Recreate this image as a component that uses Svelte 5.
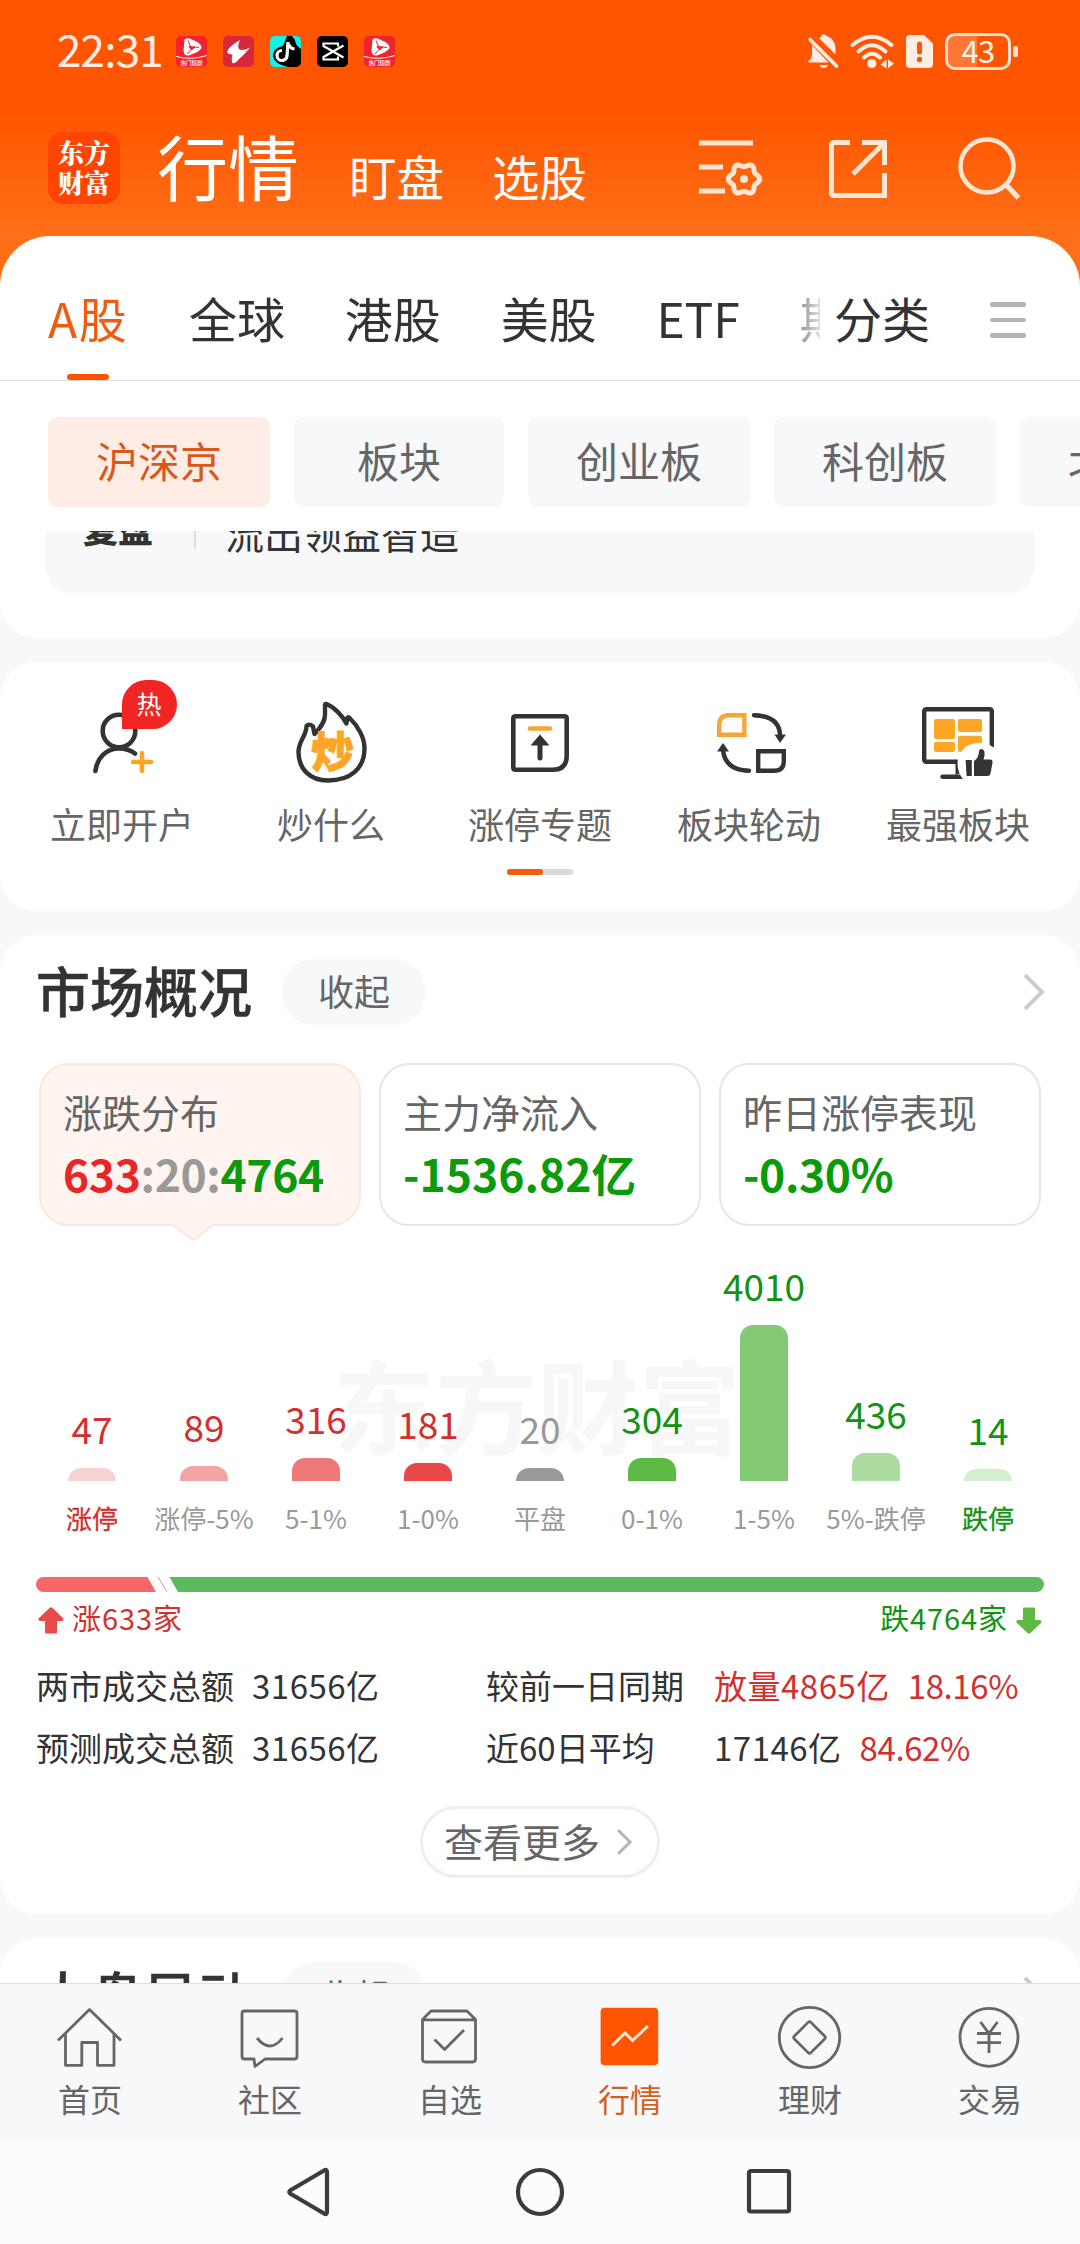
<script lang="ts">
  interface Bucket {
    label: string
    count: number
    height: number
    color: string
    tone: string
  }

  const tabs = ['A股', '全球', '港股', '美股', 'ETF', '期货']
  const chips = ['沪深京', '板块', '创业板', '科创板', '北交所']

  const buckets: Bucket[] = [
    { label: '涨停', count: 47, height: 13, color: '#fad1d2', tone: 'up edge' },
    { label: '涨停-5%', count: 89, height: 15, color: '#f3a5a6', tone: 'up' },
    { label: '5-1%', count: 316, height: 23, color: '#ee7778', tone: 'up' },
    { label: '1-0%', count: 181, height: 18, color: '#e84748', tone: 'up' },
    { label: '平盘', count: 20, height: 13, color: '#999999', tone: 'flat' },
    { label: '0-1%', count: 304, height: 23, color: '#5cb943', tone: 'down' },
    { label: '1-5%', count: 4010, height: 156, color: '#84ca74', tone: 'down' },
    { label: '5%-跌停', count: 436, height: 28, color: '#addca1', tone: 'down' },
    { label: '跌停', count: 14, height: 12, color: '#d6eed0', tone: 'down edge' },
  ]

  const nav = ['首页', '社区', '自选', '行情', '理财', '交易']
  const activeNav = '行情'

  // wavy outline of the settings gear
  function gearPath(cx: number, cy: number, r: number, wave: number) {
    let d = ''
    for (let i = 0; i < 72; i++) {
      const a = (i / 72) * Math.PI * 2
      const rr = r + wave * Math.cos(6 * a)
      d += `${i ? 'L' : 'M'}${(cx + rr * Math.cos(a)).toFixed(2)} ${(cy + rr * Math.sin(a)).toFixed(2)}`
    }
    return d + 'Z'
  }
</script>

{#snippet hotApp()}
  <svg class="app-icon" viewBox="0 0 31 31">
    <rect width="31" height="31" rx="5" fill="#f2222e" />
    <path d="M8.500 3.500Q11 1 16 3.500Q26 7.500 25.500 12Q24 15.500 13 19.500Q8 20 7.500 15Z" fill="#fff" />
    <path d="M13 10.500l6 .5-3.500 3zM12 4.500l2.500 6M23 11.500l-5-.5M11 18l4-4.500" fill="#f2222e" stroke="#f2222e" stroke-width="1" />
    <path d="M0 20.500Q15 24.500 31 19.500" fill="none" stroke="#fff" stroke-width="1" />
    <text x="15.500" y="29" text-anchor="middle" font-size="5.500" font-weight="500" fill="#fff">热门短剧</text>
  </svg>
{/snippet}

{#snippet chevron()}
  <svg class="chevron" viewBox="0 0 24 40" fill="none" stroke="#ccc" stroke-width="4">
    <path d="M3 3l17 17L3 37" />
  </svg>
{/snippet}

<div class="app">
  <header class="header">
    <div class="status">
      <span class="clock">22:31</span>
      <div class="status-apps">
        {@render hotApp()}
        <svg class="app-icon" viewBox="0 0 31 31">
          <rect width="31" height="31" rx="5" fill="#d8283a" />
          <path d="M17 4Q5 11 4 16Q4.500 18 9.500 18.500Q8 24 9.500 27Q11.500 28.500 16 23Q21 19 27 11.500Q21.500 15 16.500 13.500Q13.500 11.500 17 4Z" fill="#fff" />
        </svg>
        <svg class="app-icon" viewBox="0 0 31 31">
          <rect width="31" height="31" rx="5" fill="#000" />
          <path d="M5 0H17Q14 8 13 10Q3 12 3 20Q4 28 18 31H5Q0 31 0 26V5Q0 0 5 0ZM22 0h4q5 0 5 5v8q-6-4-6-9z" fill="#19efe4" />
          <path d="M18 6l-1 14a5 5 0 1 1-5-5.500M18.500 8q1.500 4.500 6 5" fill="none" stroke="#fff" stroke-width="3.200" />
        </svg>
        <svg class="app-icon" viewBox="0 0 31 31">
          <rect width="31" height="31" rx="5" fill="#000" />
          <path d="M26.500 9.500L6.500 21V23.500H21V20.500M26.500 21.500L6.500 10V7.500H21V10.500" fill="none" stroke="#fff" stroke-width="2.200" />
        </svg>
        {@render hotApp()}
      </div>
      <div class="status-right">
        <svg class="bell" viewBox="0 0 30 34" fill="#ffece3">
          <path d="M4 11L20.500 28.500H.5V26.500Q4 25 4 20Z" />
          <path d="M11 4Q13 3 13.500 1.500Q15.700-.8 18 1.500Q27 5 27.500 14V20.500Z" />
          <path d="M11.500 31h8.500q-1 3-4.200 3t-4.300-3z" />
          <path d="M2 5.500l26.500 26.500" stroke="#ffece3" stroke-width="3.600" stroke-linecap="round" />
        </svg>
        <svg class="wifi" viewBox="0 0 44 34" fill="none" stroke="#ffece3" stroke-width="4" stroke-linecap="round">
          <path d="M2.500 11Q22-5.500 41.500 11M8.500 17.500Q22 5 35.500 17.500M14 23.500Q22 16 30 23.500" />
          <circle cx="21.800" cy="29.500" r="4.600" fill="#ffece3" stroke="none" />
          <path d="M30.500 30.500l6-5v9zM44 29.500l-6-4v9z" fill="#ffece3" stroke="none" />
        </svg>
        <svg class="sim" viewBox="0 0 27 33">
          <path d="M4 0H18L27 8.500V29Q27 33 23 33H4Q0 33 0 29V4Q0 0 4 0Z" fill="#ffece3" />
          <path d="M13.500 9v8" stroke="#ff5500" stroke-width="5" stroke-linecap="round" />
          <circle cx="13.500" cy="24.500" r="2.700" fill="#ff5500" />
        </svg>
        <div class="battery"><span class="battery-level"></span><span class="battery-text">43</span></div>
        <span class="battery-nub"></span>
      </div>
    </div>

    <div class="titlebar">
      <div class="logo"><span>东方</span><span>财富</span></div>
      <nav class="sections">
        <span class="section current">行情</span>
        <span class="section">盯盘</span>
        <span class="section">选股</span>
      </nav>
      <div class="actions">
        <svg width="64" height="58" viewBox="0 0 64 58" fill="none" stroke="#ffe5d3" stroke-width="5">
          <path d="M0 3H54M0 27H24M0 51H26" />
          <path d={gearPath(45, 39, 14, 1.7)} stroke-linejoin="round" />
          <circle cx="45" cy="39" r="4" fill="#ffe5d3" stroke="none" />
        </svg>
        <svg width="58" height="58" viewBox="0 0 58 58" fill="none" stroke="#ffe5d3" stroke-width="5">
          <path d="M21 2.500H5.500Q2.500 2.500 2.500 5.500V52.500Q2.500 55.500 5.500 55.500H55.500V33M33 2.500H55.500V25M55 3L24 34" />
        </svg>
        <svg class="search" width="62" height="64" viewBox="0 0 62 64" fill="none" stroke="#ffe5d3" stroke-width="4.600">
          <circle cx="29" cy="29" r="26.500" />
          <path d="M47.500 47L60.500 61" stroke-width="5" />
        </svg>
      </div>
    </div>
  </header>

  <main class="content">
    <section class="panel top-panel">
      <div class="tabs">
        <div class="tab-list">
          {#each tabs as tab, i}
            <span class="tab" class:active={i === 0}>{tab}</span>
          {/each}
        </div>
        <span class="tab category">分类</span>
        <span class="menu"><i></i><i></i><i></i></span>
      </div>
      <div class="chips">
        {#each chips as chip, i}
          <span class="chip" class:active={i === 0}>{chip}</span>
        {/each}
      </div>
      <div class="news">
        <b class="news-tag">复盘</b>
        <span class="news-line"></span>
        <span class="news-text">流出领益智造</span>
      </div>
    </section>

    <section class="panel shortcuts">
      <div class="shortcut-grid">
        <div class="shortcut">
          <svg viewBox="0 0 90 90" fill="none" stroke="#333" stroke-width="4.600" stroke-linecap="round">
            <circle cx="42" cy="33" r="16.300" />
            <path d="M18.400 73C20 60 29 50.500 42 50.500C49 50.500 54 52.500 58 55.500" />
            <path d="M56 64h18M65 55v18" stroke="#ffa526" />
          </svg>
          <span class="hot">热</span>
          立即开户
        </div>
        <div class="shortcut">
          <svg viewBox="0 0 90 90" fill="none" stroke="#333" stroke-width="4.400" stroke-linejoin="round">
            <path d="M40.500 6C48 9 57 18 60.400 25.500L61.500 20Q62.500 18 64.500 21C72 28 78.500 40 78.500 50C78.500 71 64 82.500 42 82.500C24 82.500 12.500 71 12.500 54C12.500 43 20.500 38 20.500 28Q23 25 27 28.500L28.500 36C33 31 39 25 39 17V8Q38.500 5.500 40.500 6Z" />
            <text x="46.500" y="70" text-anchor="middle" font-size="43" font-weight="900" fill="#ffa526" stroke="#ffa526" stroke-width="1">炒</text>
          </svg>
          炒什么
        </div>
        <div class="shortcut">
          <svg viewBox="0 0 90 90" fill="none" stroke="#333" stroke-width="4.600">
            <path d="M20.500 18.300H69.500Q71.700 18.300 71.700 20.500V58Q71.700 71.700 58 71.700H20.500Q18.300 71.700 18.300 69.500V20.500Q18.300 18.300 20.500 18.300Z" />
            <path d="M35 30.500H55" stroke="#f5a637" stroke-linecap="round" />
            <path d="M45 42V60" stroke-width="5" stroke-linecap="round" />
            <path d="M45 36.500L54.500 47.500H35.500Z" fill="#333" stroke="none" />
          </svg>
          涨停专题
        </div>
        <div class="shortcut">
          <svg viewBox="0 0 90 90" fill="none" stroke="#333" stroke-width="4.400">
            <path d="M25 17.200H40.400V36.800H15.200V27Q15.200 17.200 25 17.200Z" stroke="#f5a637" />
            <path d="M54.200 53.200H79.800V63Q79.800 72.800 70 72.800H54.200Z" />
            <path d="M50 17.200Q76 18 76 38M45 72.800Q21 72 19 52" stroke-linecap="round" />
            <path d="M70.500 36.500H82L76 45ZM13 53.500H25L19 45Z" fill="#333" stroke="none" />
          </svg>
          板块轮动
        </div>
        <div class="shortcut">
          <svg viewBox="0 0 90 90">
            <rect x="11.200" y="11.200" width="67.600" height="52.600" rx="2" fill="none" stroke="#333" stroke-width="4.400" />
            <path d="M42.500 64h8v10l-8 3z" fill="#333" />
            <path d="M29.500 78.700H52" stroke="#333" stroke-width="4.400" stroke-linecap="round" />
            <g fill="#ffa526">
              <rect x="21" y="21" width="21" height="20" rx="2" />
              <rect x="45" y="21" width="24" height="13" rx="2" />
              <rect x="21" y="44" width="21" height="10" rx="2" />
              <rect x="45" y="37.700" width="24" height="16.300" rx="2" />
            </g>
            <path d="M50.500 82C42 72 42 56 54 48Q70 40 84 52V82Z" fill="#fff" />
            <path d="M52.600 62h6.200v16h-5.200zM61 63Q66 60 66 53Q67 50 70 51.500Q73 54 70.500 61.500H77Q80 61.500 79.500 64.500L77.500 75.500Q77 78 74.500 78H61Z" fill="#333" />
          </svg>
          最强板块
        </div>
      </div>
      <div class="pager"><span></span></div>
    </section>

    <section class="panel market">
      <div class="panel-head">
        <h2>市场概况</h2>
        <span class="fold">收起</span>
        {@render chevron()}
      </div>

      <div class="cards">
        <div class="card selected">
          <span class="card-label">涨跌分布</span>
          <span class="card-value tight"><em class="red">633</em><em class="gray">:20:</em>4764</span>
          <svg class="pointer" width="40" height="18" viewBox="0 0 40 18">
            <path d="M0 0L17.500 14.500Q20 16.500 22.500 14.500L40 0Z" fill="#fff4f0" />
            <path d="M0 1L17.500 14.500Q20 16.500 22.500 14.500L40 1" fill="none" stroke="#fde7dc" stroke-width="2" />
          </svg>
        </div>
        <div class="card">
          <span class="card-label">主力净流入</span>
          <span class="card-value">-1536.82亿</span>
        </div>
        <div class="card">
          <span class="card-label">昨日涨停表现</span>
          <span class="card-value tight">-0.30%</span>
        </div>
      </div>

      <div class="chart">
        <span class="watermark">东方财富</span>
        {#each buckets as b}
          <div class="col {b.tone}">
            <span class="count">{b.count}</span>
            <span class="bar" style="height:{b.height}px;background:{b.color}"></span>
            <span class="bucket">{b.label}</span>
          </div>
        {/each}
      </div>

      <svg class="ratio" viewBox="0 0 1008 15">
        <path d="M7.500 0H111.500L120 15H7.500A7.500 7.500 0 0 1 7.500 0Z" fill="#f96666" />
        <path d="M122 0L131 15" stroke="#bbb" stroke-width="1.200" />
        <path d="M133.500 0H1000.500A7.500 7.500 0 0 1 1000.500 15H142Z" fill="#5cba5c" />
      </svg>
      <div class="ratio-row">
        <span class="up">
          <svg width="26" height="27" viewBox="0 0 26 27"><path d="M11.500 1Q13-.3 14.500 1L25.500 11.500Q26 14 23.500 14H19V25.500Q19 26.500 18 26.500H8Q7 26.500 7 25.500V14H2.500Q0 14 .5 11.500Z" fill="#e94b4b" /></svg>
          涨633家
        </span>
        <span class="down">
          跌4764家
          <svg width="26" height="27" viewBox="0 0 26 27"><path d="M11.500 26Q13 27.300 14.500 26L25.500 15.500Q26 13 23.500 13H19V1.500Q19 .5 18 .5H8Q7 .5 7 1.500V13H2.500Q0 13 .5 15.500Z" fill="#5cb943" /></svg>
        </span>
      </div>

      <div class="totals">
        <span>两市成交总额</span><span class="num">31656亿</span>
        <span>较前一日同期</span><span class="pair red-text"><i class="num">放量4865亿</i><i class="pct">18.16%</i></span>
        <span>预测成交总额</span><span class="num">31656亿</span>
        <span>近60日平均</span><span class="pair"><i class="num">17146亿</i><i class="pct red-text">84.62%</i></span>
      </div>

      <button class="more" type="button">
        <span>查看更多</span>
        <svg width="15" height="26" viewBox="0 0 15 26" fill="none" stroke="#b3b3b3" stroke-width="3" stroke-linecap="round"><path d="M2 2l11 11L2 24" /></svg>
      </button>
    </section>

    <section class="panel moves">
      <div class="panel-head">
        <h2>大盘异动</h2>
        <span class="fold">收起</span>
        {@render chevron()}
      </div>
    </section>
  </main>

  <nav class="bottom-nav">
    {#each nav as item}
      <div class="nav-item" class:active={item === activeNav}>
        <svg viewBox="0 0 70 66" fill="none" stroke="#666" stroke-width="2.800" stroke-linejoin="round">
          {#if item === '首页'}
            <path d="M3 36.500L34.500 5.500L66 36.500" />
            <path d="M10.500 30V61.300H26.800V38.500H42.500V61.300H59V30" />
          {:else if item === '社区'}
            <path d="M9.500 7H59.500Q62 7 62 9.500V52.500Q62 55 59.500 55H30L20 62.500L19 55H9.500Q7 55 7 52.500V9.500Q7 7 9.500 7Z" />
            <path d="M22 34Q35 50 47.500 34" />
          {:else if item === '自选'}
            <path d="M7.500 15.500L16 7H52L60.500 15.500V55Q60.500 58 57.500 58H10.500Q7.500 58 7.500 55ZM7.500 15.800H60.500" />
            <path d="M19.500 35.500L29.600 45.500L49 26" />
          {:else if item === '行情'}
            <rect x="5.600" y="3.700" width="57.600" height="57.600" rx="4" fill="#ff5500" stroke="none" />
            <path d="M17.300 41.500L30 29L37.600 36.500L52.800 22" stroke="#ffe9d6" stroke-width="3" stroke-linejoin="miter" />
          {:else if item === '理财'}
            <circle cx="34.500" cy="33.500" r="30.200" />
            <rect x="22.800" y="21.800" width="23.400" height="23.400" rx="2" transform="rotate(45 34.500 33.500)" />
          {:else}
            <circle cx="34" cy="33.300" r="29" />
            <path d="M25.500 18L34 29.500L42.500 18M34 29V49M22 29.500H46M22 38.700H46" />
          {/if}
        </svg>
        {item}
      </div>
    {/each}
  </nav>

  <div class="system-nav">
    <svg viewBox="0 0 504 50" fill="none" stroke="#3c3c3c" stroke-width="4.200" stroke-linejoin="round">
      <path d="M2.500 23.200L36.500 3.200Q39 2.200 39 5V45Q39 47.800 36.500 46.800L2.500 26.800Q0 25 2.500 23.200Z" />
      <circle cx="252" cy="25" r="22" />
      <rect x="461" y="4" width="40" height="40.500" rx="2" />
    </svg>
  </div>
</div>

<style>
  :global(body) {
    background: #f7f8fa;
  }

  .app {
    width: 1080px;
    height: 2244px;
    display: flex;
    flex-direction: column;
    overflow: hidden;
    color: #333;
    font-family: 'Noto Sans CJK SC', sans-serif;
    background: #f7f8fa;
  }

  i,
  em {
    font-style: normal;
  }

  svg {
    display: block;
    flex: none;
    overflow: visible;
  }

  /* header */
  .header {
    height: 290px;
    flex: none;
    background: linear-gradient(#ff5500 0, #ff5500 112px, #ff6f18 236px);
  }

  .status {
    height: 102px;
    display: flex;
    align-items: center;
    padding: 0 62px 0 57px;
    box-sizing: border-box;
  }

  .clock {
    width: 119px;
    color: #ffece3;
    font-size: 44px;
    line-height: 60px;
    letter-spacing: -0.8px;
    padding-bottom: 6px;
  }

  .status-apps {
    display: flex;
    gap: 16px;
  }

  .app-icon {
    width: 31px;
    height: 31px;
  }

  .status-right {
    display: flex;
    align-items: center;
    margin-left: auto;
  }

  .bell {
    width: 30px;
    height: 34px;
  }

  .wifi {
    width: 44px;
    height: 34px;
    margin: 0 12px;
  }

  .sim {
    width: 27px;
    height: 33px;
  }

  .battery {
    position: relative;
    width: 66px;
    height: 37px;
    margin-left: 12px;
    box-sizing: border-box;
    border: 3px solid #ffe0d0;
    border-radius: 10px;
    text-align: center;
  }

  .battery-level {
    position: absolute;
    inset: 0 auto 0 0;
    width: 49%;
    border-radius: 7px 0 0 7px;
    background: rgba(255, 255, 255, 0.2);
  }

  .battery-text {
    display: block;
    color: #fff3ed;
    font-size: 31px;
    line-height: 27px;
    letter-spacing: -0.8px;
  }

  .battery-nub {
    width: 5px;
    height: 11px;
    margin-left: 2px;
    border-radius: 2px;
    background: #ffe0d0;
  }

  .titlebar {
    height: 134px;
    display: flex;
    align-items: center;
    padding: 0 60px 0 48px;
  }

  .logo {
    width: 72px;
    height: 72px;
    display: flex;
    flex-direction: column;
    justify-content: center;
    align-items: center;
    border-radius: 15px;
    background: #ff4500;
    color: #fff;
    font-family: 'Noto Serif CJK SC', 'Noto Sans CJK SC', serif;
    font-size: 26px;
    font-weight: 900;
    line-height: 30px;
    margin-top: -2px;
    padding-bottom: 3px;
    box-sizing: border-box;
  }

  .sections {
    display: flex;
    align-items: baseline;
    margin-left: 37px;
    color: #fff;
  }

  .section {
    font-size: 47.500px;
    line-height: 70px;
    margin-left: 50px;
    position: relative;
    top: 1px;
  }

  .section + .section + .section {
    margin-left: 48px;
  }

  .section.current {
    font-size: 71px;
    margin-left: 0;
    top: 0;
  }

  .actions {
    display: flex;
    align-items: center;
    gap: 66px;
    margin-left: auto;
  }

  .search {
    margin-left: 5px;
  }

  /* panels */
  .content {
    flex: 1;
    min-height: 0;
    margin-top: -54px;
    overflow: hidden;
    display: flex;
    flex-direction: column;
    gap: 24px;
  }

  .panel {
    flex: none;
    box-sizing: border-box;
    border-radius: 36px;
    background: #fff;
  }

  .top-panel {
    height: 402px;
    border-radius: 50px 50px 36px 36px;
  }

  .tabs {
    height: 145px;
    box-sizing: border-box;
    display: flex;
    border-bottom: 1px solid #ddd;
    padding-left: 48px;
  }

  .tab-list {
    width: 772px;
    display: flex;
    gap: 60px;
    overflow: hidden;
    mask-image: linear-gradient(to right, #000 728px, transparent 780px);
  }

  .tab {
    flex: none;
    position: relative;
    font-size: 48px;
    line-height: 163px;
    letter-spacing: -0.1px;
    white-space: nowrap;
  }

  .tab.active {
    width: 81px;
    color: #f25c10;
    letter-spacing: 1.600px;
  }

  .tab.active::after {
    content: '';
    position: absolute;
    left: 19px;
    top: 138px;
    width: 42px;
    height: 6px;
    border-radius: 3px;
    background: #fa5400;
  }

  .category {
    margin-left: 14px;
  }

  .menu {
    width: 36px;
    margin: 66px 0 0 60px;
    display: flex;
    flex-direction: column;
    gap: 11px;
  }

  .menu i {
    height: 4.600px;
    border-radius: 2px;
    background: #b3b3b3;
  }

  .chips {
    display: flex;
    gap: 24px;
    padding: 36px 0 24px 48px;
    overflow: hidden;
  }

  .chip {
    flex: none;
    min-width: 210px;
    height: 90px;
    padding: 0 48px;
    box-sizing: border-box;
    border-radius: 9px;
    background: #f7f8fa;
    color: #666;
    font-size: 42px;
    line-height: 86px;
    text-align: center;
  }

  .chip.active {
    background: #ffede5;
    color: #d9591a;
  }

  .news {
    display: flex;
    align-items: flex-start;
    height: 62px;
    margin: 0 45px;
    overflow: hidden;
    border-radius: 0 0 26px 26px;
    background: #f7f8fa;
  }

  .news-tag {
    width: 112px;
    padding-left: 38px;
    margin-top: -23px;
    font-size: 35px;
    font-weight: 900;
    line-height: 40px;
    box-sizing: content-box;
    width: 74px;
    padding-right: 38px;
    margin-right: -1px;
  }

  .news-line {
    width: 2px;
    height: 18px;
    background: #ddd;
  }

  .news-text {
    margin: -19px 0 0 29px;
    font-size: 39px;
    line-height: 40px;
  }

  /* shortcuts */
  .shortcuts {
    height: 249px;
    padding-top: 36px;
  }

  .shortcut-grid {
    display: grid;
    grid-template-columns: repeat(5, 209px);
    justify-content: center;
  }

  .shortcut {
    position: relative;
    display: flex;
    flex-direction: column;
    align-items: center;
    color: #666;
    font-size: 36px;
    line-height: 50px;
  }

  .shortcut svg {
    width: 90px;
    height: 90px;
    margin: 0 1px 10px 0;
  }

  .hot {
    position: absolute;
    top: -18px;
    left: 104px;
    width: 55px;
    height: 49px;
    border-radius: 27px 27px 27px 0;
    background: #f22525;
    color: #fff;
    font-size: 25px;
    line-height: 46px;
    text-align: center;
  }

  .pager {
    width: 66px;
    height: 6px;
    margin: 21px auto 0;
    border-radius: 3px;
    background: #d5d8dd;
  }

  .pager span {
    display: block;
    width: 36px;
    height: 6px;
    border-radius: 3px;
    background: #f25a10;
  }

  /* market overview */
  .market {
    height: 979px;
    padding: 24px 36px 0;
  }

  .moves {
    padding: 24px 36px;
  }

  .panel-head {
    height: 66px;
    display: flex;
    align-items: center;
  }

  h2 {
    width: 246px;
    margin: 0;
    padding-bottom: 4px;
    font-size: 54px;
    font-weight: 500;
    line-height: 60px;
    white-space: nowrap;
    -webkit-text-stroke: 0.5px #333;
  }

  .fold {
    width: 144px;
    height: 66px;
    border-radius: 33px;
    background: #f7f8fa;
    color: #666;
    font-size: 36px;
    line-height: 63px;
    text-align: center;
  }

  .moves h2 {
    padding-bottom: 0;
  }

  .moves .fold {
    line-height: 66px;
  }

  .chevron {
    width: 24px;
    height: 40px;
    margin: 0 -2px 0 auto;
  }

  .cards {
    display: grid;
    grid-template-columns: repeat(3, 322px);
    gap: 18px;
    margin: 38px 0 0 3px;
  }

  .card {
    position: relative;
    height: 163px;
    padding: 19px 0 0 22px;
    box-sizing: border-box;
    border: 2px solid #e6e6e6;
    border-radius: 30px;
    display: flex;
    flex-direction: column;
  }

  .card.selected {
    border-color: #fde7dc;
    background: #fff4f0;
  }

  .card-label {
    color: #666;
    font-size: 39px;
    line-height: 55px;
  }

  .card-value {
    color: #0a9a0a;
    font-size: 44.500px;
    font-weight: 700;
    line-height: 68px;
    white-space: nowrap;
  }

  .card-value.tight {
    letter-spacing: -0.4px;
  }

  .red {
    color: #e8262a;
  }

  .gray {
    color: #999;
  }

  .pointer {
    position: absolute;
    left: 132px;
    top: 159px;
  }

  .chart {
    position: relative;
    display: flex;
    height: 307px;
    align-items: flex-end;
  }

  .watermark {
    position: absolute;
    left: 297px;
    top: 115px;
    color: #f7f7f7;
    font-size: 102px;
    font-weight: 700;
    line-height: 124px;
  }

  .col {
    position: relative;
    width: 112px;
    display: flex;
    flex-direction: column;
    align-items: center;
    white-space: nowrap;
  }

  .count {
    margin-bottom: 18px;
    font-size: 37px;
    line-height: 44px;
  }

  .bar {
    width: 48px;
    border-radius: 13px 13px 0 0;
  }

  .bucket {
    margin-top: 22px;
    color: #999;
    font-size: 26px;
    line-height: 30px;
  }

  .up .count,
  .up.edge .bucket,
  span.up {
    color: #d0312f;
  }

  .flat .count {
    color: #999;
  }

  .down .count,
  .down.edge .bucket,
  span.down {
    color: #139313;
  }

  .edge .bucket {
    -webkit-text-stroke: 0.3px currentColor;
  }

  .ratio {
    width: 1008px;
    height: 15px;
    margin-top: 44px;
  }

  .ratio-row {
    display: flex;
    justify-content: space-between;
    margin: 5px 2px 0;
    font-size: 29px;
    line-height: 40px;
    height: 40px;
    letter-spacing: 0.9px;
  }

  .ratio-row span {
    display: flex;
    gap: 8px;
  }

  .ratio-row svg {
    margin-top: 10px;
  }

  .totals {
    display: grid;
    grid-template-columns: 216px 234px 228px auto;
    margin-top: 17px;
    font-size: 33px;
    line-height: 62px;
    white-space: nowrap;
  }

  .num {
    letter-spacing: 0.5px;
  }

  .pct {
    letter-spacing: -0.4px;
  }

  .pair {
    display: flex;
    gap: 18px;
  }

  .red-text {
    color: #d0312f;
  }

  .more {
    width: 240px;
    height: 72px;
    display: flex;
    align-items: center;
    gap: 17px;
    margin: 28px auto 0;
    padding: 0 0 0 21px;
    border: 3px solid #eee;
    border-radius: 36px;
    background: #fff;
    color: #666;
    font-family: inherit;
    font-size: 39px;
    line-height: 60px;
    white-space: nowrap;
  }

  .more span {
    padding-bottom: 4px;
  }

  /* bottom bars */
  .bottom-nav {
    flex: none;
    height: 157px;
    box-sizing: border-box;
    display: grid;
    grid-template-columns: repeat(6, 180px);
    padding-top: 20px;
    border-top: 1px solid #e0e0e0;
    background: #f7f8fa;
  }

  .nav-item {
    display: flex;
    flex-direction: column;
    align-items: center;
    color: #666;
    font-size: 32px;
    line-height: 40px;
  }

  .nav-item svg {
    width: 70px;
    height: 66px;
    margin-bottom: 8px;
  }

  .nav-item.active {
    color: #d4601f;
  }

  .system-nav {
    flex: none;
    height: 104px;
    display: flex;
    justify-content: center;
    background: #fcfcfc;
  }

  .system-nav svg {
    width: 504px;
    height: 50px;
    margin-top: 27px;
  }
</style>
